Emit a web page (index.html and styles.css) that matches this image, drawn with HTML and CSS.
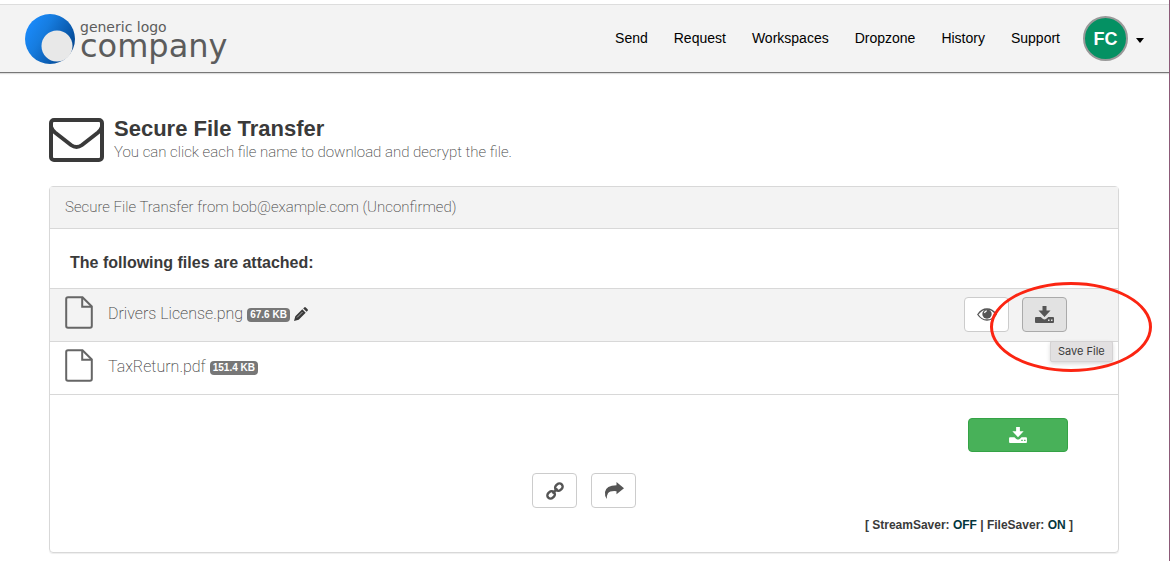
FILE: index.html
```
<!DOCTYPE html>
<html lang="en">
<head>
  <meta charset="UTF-8">
  <meta name="viewport" content="width=device-width, initial-scale=1">
  <title>Secure File Transfer</title>
  <link rel="stylesheet" href="styles.css">
</head>
<body>
  <!-- shared icon shapes -->
  <svg class="sprite" aria-hidden="true">
    <symbol id="icon-save" viewBox="0 0 19 17">
      <path d="M7.500 0h4v4.500H15.500L9.500 11 3.500 4.500h4z"/>
      <path fill-rule="evenodd" d="M1 11h4.700l2 1.800q1.800 1.200 3.600 0l2-1.800H18q1 0 1 1v4q0 1-1 1H1q-1 0-1-1v-4q0-1 1-1zM13 13.500v1.500h1.500v-1.500zM16 13.500v1.500h1.500v-1.500z"/>
    </symbol>
    <symbol id="icon-file" viewBox="0 0 28 33">
      <path d="M3 1.200h14.500L26.800 10.500V30q0 1.800-1.800 1.800H3Q1.200 31.800 1.200 30V3Q1.200 1.200 3 1.200z"/>
      <path d="M17.200 1.500V10.800H26.500"/>
    </symbol>
  </svg>

  <header class="navbar">
    <a class="logo" href="#" aria-label="generic logo company">
      <svg class="logo-mark" viewBox="0 0 50 50" aria-hidden="true">
        <defs>
          <linearGradient id="logoBlue" x1="0" y1="0.200" x2="1" y2="0.800">
            <stop offset="0" stop-color="#1a8cff"/>
            <stop offset="0.350" stop-color="#167cdf"/>
            <stop offset="1" stop-color="#003f87"/>
          </linearGradient>
        </defs>
        <circle cx="25" cy="25" r="25" fill="url(#logoBlue)"/>
        <circle cx="32" cy="32" r="15.500" fill="#e8e8e8"/>
      </svg>
      <span class="logo-text">
        <span class="logo-small">generic logo</span>
        <span class="logo-big">company</span>
      </span>
    </a>
    <nav class="menu">
      <a href="#">Send</a>
      <a href="#">Request</a>
      <a href="#">Workspaces</a>
      <a href="#">Dropzone</a>
      <a href="#">History</a>
      <a href="#">Support</a>
      <button class="account" type="button" aria-label="Account menu">
        <span class="avatar">FC</span>
        <span class="caret"></span>
      </button>
    </nav>
  </header>

  <main class="container">
    <div class="page-title">
      <svg class="envelope" viewBox="0 0 55 44" aria-hidden="true">
        <rect x="2" y="2" width="51" height="40" rx="3"/>
        <path d="M2 9Q3 12 6 14.500L22 27Q27.500 31 33 27L49 14.500Q52 12 53 9"/>
      </svg>
      <div>
        <h1>Secure File Transfer</h1>
        <p>You can click each file name to download and decrypt the file.</p>
      </div>
    </div>

    <section class="panel">
      <div class="panel-heading">Secure File Transfer from bob@example.com (Unconfirmed)</div>
      <h2>The following files are attached:</h2>

      <ul class="files">
        <li class="file active">
          <svg class="file-icon" aria-hidden="true"><use href="#icon-file"/></svg>
          <a class="file-name" href="#">Drivers License.png</a>
          <span class="badge">67.6 KB</span>
          <button class="edit" type="button" aria-label="Rename file">
            <svg width="14" height="14" viewBox="0 0 14 14" aria-hidden="true">
              <path d="M8.300 2.300l3.400 3.400-7 7L0 14l1.300-4.700zM9.200 1.400l1-1q.8-.7 1.600 0l1.800 1.800q.7.800 0 1.600l-1 1z"/>
              <path d="M3 10.500l5.500-5.500" stroke="#f3f3f3" stroke-width="0.600"/>
            </svg>
          </button>
          <div class="actions">
            <button class="btn" type="button" aria-label="Preview file">
              <svg width="20" height="13" viewBox="0 0 20 13" aria-hidden="true">
                <path d="M.8 6.500Q4.500 1 10 1t9.200 5.500Q15.500 12 10 12T.8 6.500z" fill="none" stroke="#555" stroke-width="1.300"/>
                <circle cx="10" cy="6" r="4.700"/>
                <path d="M7.500 5Q8 3 9.800 2.800" fill="none" stroke="#fff" stroke-width="1.200"/>
              </svg>
            </button>
            <div class="save">
              <button class="btn pressed" type="button" aria-label="Save File">
                <svg width="19" height="17" aria-hidden="true"><use href="#icon-save"/></svg>
              </button>
              <span class="tooltip" role="tooltip">Save File</span>
              <span class="highlight"></span>
            </div>
          </div>
        </li>
        <li class="file">
          <svg class="file-icon" aria-hidden="true"><use href="#icon-file"/></svg>
          <a class="file-name" href="#">TaxReturn.pdf</a>
          <span class="badge">151.4 KB</span>
        </li>
      </ul>

      <div class="panel-footer">
        <button class="btn-download" type="button" aria-label="Download all files">
          <svg width="18" height="16" aria-hidden="true"><use href="#icon-save"/></svg>
        </button>
        <div class="share">
          <button class="btn" type="button" aria-label="Copy link">
            <svg width="18" height="18" viewBox="0 0 18 18" aria-hidden="true">
              <g fill="none" stroke="#555" stroke-width="2.400" transform="rotate(-45 9 9)">
                <rect x="-0.500" y="5.800" width="8" height="6.400" rx="3.200"/>
                <rect x="10.500" y="5.800" width="8" height="6.400" rx="3.200"/>
                <path d="M5.500 9h7"/>
              </g>
            </svg>
          </button>
          <button class="btn" type="button" aria-label="Forward">
            <svg width="20" height="17" viewBox="0 0 20 17" aria-hidden="true">
              <path d="M12.500 0L20 6.200l-7.500 6V9.200Q6 8.600 4 11.300 2.800 13 2.800 17 .5 13.500 1 10 2 3.400 12.500 3.200z"/>
            </svg>
          </button>
        </div>
        <p class="status">[ StreamSaver: <a href="#">OFF</a> | FileSaver: <a href="#">ON</a> ]</p>
      </div>
    </section>
  </main>
</body>
</html>
```

FILE: styles.css
```
* {
  box-sizing: border-box;
}

body {
  margin: 0;
  padding-top: 4px;
  min-height: 100vh;
  border-right: 1px solid #8c5a78;
  background: #fff;
  color: #3a3a3a;
  font-family: "Liberation Sans", Arial, sans-serif;
  font-size: 14px;
}

h1, h2, p, ul {
  margin: 0;
  padding: 0;
}

a {
  color: inherit;
  text-decoration: none;
}

button {
  padding: 0;
  font: inherit;
  cursor: pointer;
}

svg {
  display: block;
  fill: currentColor;
}

.sprite {
  position: absolute;
  width: 0;
  height: 0;
}

/* Top bar */
.navbar {
  display: flex;
  justify-content: space-between;
  align-items: center;
  height: 69px;
  padding: 0 25px 0 24px;
  background: #f3f3f3;
  border-top: 1px solid #ddd;
  border-bottom: 1px solid #777;
  box-shadow: 0 1px 1px #ddd;
}

.logo {
  display: flex;
  gap: 4px;
  color: #5c5c5c;
  font-family: "DejaVu Sans", sans-serif;
}

.logo-mark {
  width: 52px;
  height: 50px;
}

.logo-text {
  display: flex;
  flex-direction: column;
}

.logo-small {
  padding-top: 6px;
  font-size: 14px;
  line-height: 14px;
}

.logo-big {
  font-size: 32px;
  line-height: 24px;
}

.menu {
  display: flex;
  align-items: center;
  gap: 26px;
  color: #000;
}

.menu a {
  padding-bottom: 2px;
}

.account {
  display: flex;
  align-items: center;
  gap: 8px;
  margin-left: -3px;
  border: 0;
  background: none;
}

.avatar {
  width: 45px;
  height: 45px;
  border: 2px solid #999;
  border-radius: 50%;
  background: #049163;
  color: #fff;
  font-size: 18px;
  font-weight: bold;
  line-height: 43px;
  text-align: center;
}

.caret {
  margin-top: 3px;
  border: 4px solid transparent;
  border-top: 5px solid #000;
  border-bottom: 0;
}

/* Page heading */
.container {
  padding: 44px 50px 8px 49px;
}

.page-title {
  display: flex;
  align-items: center;
  gap: 10px;
  margin-bottom: 23px;
}

.envelope {
  width: 55px;
  height: 44px;
  fill: none;
  stroke: #3a3a3a;
  stroke-width: 4;
}

h1 {
  font-size: 22px;
  line-height: 24px;
}

.page-title p,
.panel-heading,
.file-name {
  color: #444;
  font-family: Roboto, sans-serif;
  font-size: 15px;
  font-weight: 200;
}

.page-title p {
  line-height: 22px;
}

/* Panel */
.panel {
  border: 1px solid #d8d8d8;
  border-radius: 4px;
  box-shadow: 0 1px 1px #eee;
}

.panel-heading {
  padding: 0 15px;
  background: #f3f3f3;
  border-bottom: 1px solid #d8d8d8;
  line-height: 41px;
}

h2 {
  padding: 24px 20px 15px;
  font-size: 16px;
  line-height: 20px;
}

.files {
  list-style: none;
  border-bottom: 1px solid #d8d8d8;
}

.file {
  display: flex;
  align-items: center;
  height: 53px;
  padding: 0 51px 0 15px;
  border-top: 1px solid #d8d8d8;
}

.file.active {
  background: #f3f3f3;
}

.file-icon {
  width: 28px;
  height: 33px;
  margin: 0 15px 6px 0;
  fill: none;
  stroke: #666;
  stroke-width: 2;
}

.file-name {
  padding-bottom: 4px;
  font-size: 16px;
}

.badge {
  margin-left: 4px;
  padding: 0 3px;
  border-radius: 4px;
  background: #777;
  color: #fff;
  font-size: 10px;
  font-weight: bold;
  line-height: 14px;
}

.edit {
  margin: 0 0 2px 4px;
  border: 0;
  background: none;
  color: #3a3a3a;
}

.actions {
  display: flex;
  gap: 13px;
  margin: 0 0 2px auto;
}

.btn {
  display: flex;
  align-items: center;
  justify-content: center;
  width: 45px;
  height: 35px;
  border: 1px solid #ccc;
  border-radius: 4px;
  background: #fff;
  color: #555;
}

.btn.pressed {
  background: #e2e2e2;
  border-color: #aaa;
}

.save {
  position: relative;
}

.tooltip {
  position: absolute;
  top: 44px;
  left: 28px;
  padding: 0 7px;
  border: 1px solid #d4d2d3;
  border-radius: 2px;
  background: #e2e0e1;
  box-shadow: 0 2px 4px rgba(0, 0, 0, 0.15);
  font-family: Inter, sans-serif;
  font-size: 11px;
  line-height: 19px;
  white-space: nowrap;
}

/* Red ring round the save button */
.highlight {
  position: absolute;
  top: -15px;
  left: -32px;
  width: 162px;
  height: 90px;
  border: 3px solid #fb2512;
  border-radius: 50%;
  pointer-events: none;
}

/* Actions under the list */
.panel-footer {
  padding: 23px 45px 18px;
}

.btn-download {
  display: flex;
  align-items: center;
  justify-content: center;
  width: 100px;
  height: 34px;
  margin: 0 5px 21px auto;
  border: 1px solid #35a346;
  border-radius: 4px;
  background: #48b159;
  color: #fff;
}

.share {
  display: flex;
  justify-content: center;
  gap: 14px;
  margin-bottom: 8px;
}

.status {
  font-size: 12px;
  font-weight: bold;
  line-height: 18px;
  text-align: right;
}

.status a {
  color: #03363d;
}
```
